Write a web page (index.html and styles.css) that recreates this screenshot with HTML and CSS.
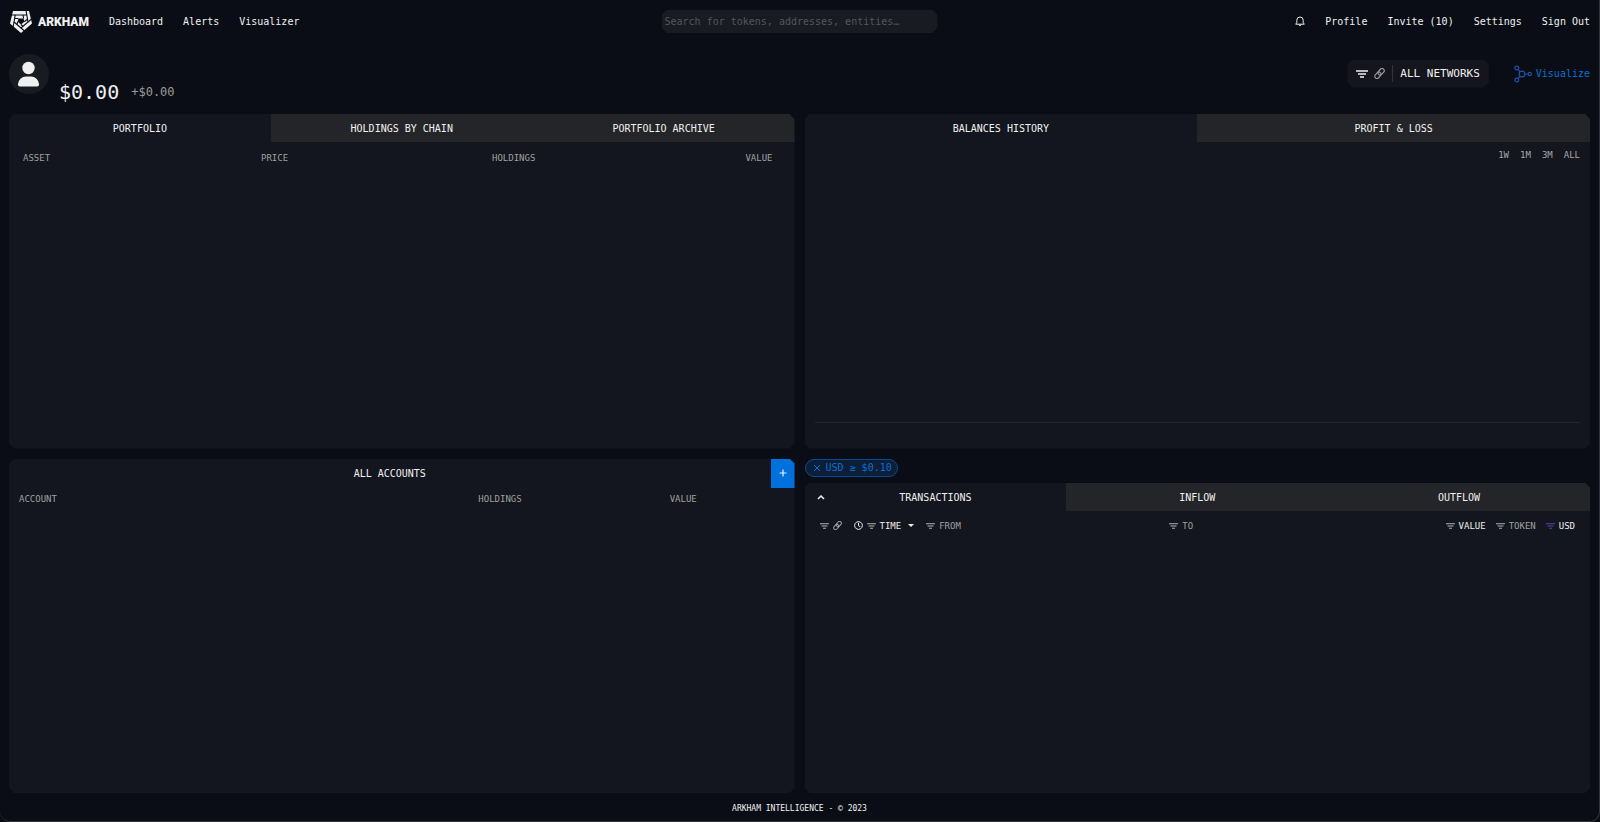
FILE: index.html
```html
<!DOCTYPE html>
<html lang="en">
<head>
    <meta charset="UTF-8">
    <meta name="viewport" content="width=device-width, initial-scale=1.0">
    <title>Arkham</title>
    <link rel="stylesheet" href="styles.css">
</head>
<body>
    <!-- Shared icons -->
    <svg class="sprite" aria-hidden="true">
        <symbol id="filter" viewBox="0 0 12 8">
            <path d="M0 1h12M2 4h8M4 7h4" fill="none" stroke="currentColor" stroke-width="1.6"/>
        </symbol>
        <symbol id="link" viewBox="0 0 12 12">
            <g fill="none" stroke="currentColor" stroke-width="1.3" transform="rotate(-48 6 6)">
                <rect x="-.5" y="3.6" width="7.8" height="4.8" rx="2.4"/>
                <rect x="4.7" y="3.6" width="7.8" height="4.8" rx="2.4"/>
            </g>
        </symbol>
    </svg>

    <header class="topbar">
        <nav class="nav-left">
            <a href="#" class="logo">
                <svg class="logo-mark" viewBox="0 0 24 24" aria-hidden="true">
                    <path d="M4 1H20L23 13.500L12 23L1 13.500Z" fill="#f0f0f0"/>
                    <g fill="none" stroke="#0a0d15" stroke-width="1.1">
                        <path d="M6.200 5H17.800L19 12L12 18L5 12Z"/>
                        <path d="M17.800 5L17.100 1M19 12L22.500 9M12 18L15.500 21M5 12L4 17.500M6.200 5H2.500"/>
                        <path d="M14.600 8.500L14 5M15.300 11.700L18 9.500M12 14.500L14 16.500M8.700 11.700L8 14.500M9.400 8.500H6"/>
                    </g>
                    <path d="M9.400 8.500H14.600L15.300 11.700L12 14.500L8.700 11.700Z" fill="#0a0d15"/>
                </svg>
                <span class="logo-text">ARKHAM</span>
            </a>
            <a href="#">Dashboard</a>
            <a href="#">Alerts</a>
            <a href="#">Visualizer</a>
        </nav>
        <input type="search" class="search cut" aria-label="Search" placeholder="Search for tokens, addresses, entities…">
        <nav class="nav-right">
            <button class="icon-button" aria-label="Notifications">
                <svg class="bell" viewBox="0 0 10 11" aria-hidden="true">
                    <path d="M.7 8.200h8.600L8.200 6.700V4.200a3.200 3.200 0 0 0-6.400 0v2.500ZM3.900 8.500a1.100 1.100 0 0 0 2.200 0" fill="none" stroke="currentColor" stroke-width="1"/>
                </svg>
            </button>
            <a href="#">Profile</a>
            <a href="#">Invite (10)</a>
            <a href="#">Settings</a>
            <a href="#">Sign Out</a>
        </nav>
    </header>

    <section class="summary">
        <div class="avatar">
            <svg viewBox="0 0 22 26" aria-hidden="true">
                <circle cx="10.500" cy="7" r="6.200"/>
                <path d="M0 23a8 8 0 0 1 8-7.500h5a8 8 0 0 1 8 7.500a2 2 0 0 1-2 2.500h-17a2 2 0 0 1-2-2.500Z"/>
            </svg>
        </div>
        <div class="balance">
            <span class="total">$0.00</span>
            <span class="change">+$0.00</span>
        </div>
        <button class="networks cut">
            <svg class="filter-large"><use href="#filter"/></svg>
            <svg class="link-icon"><use href="#link"/></svg>
            <span class="networks-label">ALL NETWORKS</span>
        </button>
        <a href="#" class="visualize">
            <svg viewBox="0 0 18 18" aria-hidden="true">
                <g fill="none" stroke="currentColor" stroke-width="1.2">
                    <circle cx="8" cy="9" r="2.900"/>
                    <circle cx="2.800" cy="3" r="1.900"/>
                    <circle cx="2.800" cy="15" r="1.900"/>
                    <circle cx="15.800" cy="9" r="1.600"/>
                    <path d="M4 4.500l2.200 2.300M4 13.500l2.200-2.300M11 9h3"/>
                </g>
            </svg>
            Visualize
        </a>
    </section>

    <main class="grid">
        <section class="panel cut">
            <div class="tabs">
                <button class="tab active">PORTFOLIO</button>
                <button class="tab">HOLDINGS BY CHAIN</button>
                <button class="tab">PORTFOLIO ARCHIVE</button>
            </div>
            <table class="portfolio-table">
                <thead>
                    <tr>
                        <th>ASSET</th>
                        <th>PRICE</th>
                        <th>HOLDINGS</th>
                        <th>VALUE</th>
                    </tr>
                </thead>
            </table>
        </section>

        <section class="panel cut">
            <div class="tabs">
                <button class="tab active">BALANCES HISTORY</button>
                <button class="tab">PROFIT &amp; LOSS</button>
            </div>
            <div class="ranges">
                <button>1W</button>
                <button>1M</button>
                <button>3M</button>
                <button>ALL</button>
            </div>
            <div class="chart"></div>
        </section>

        <section class="panel cut">
            <div class="panel-header">
                <h2>ALL ACCOUNTS</h2>
                <button class="add" aria-label="Add account">
                    <svg viewBox="0 0 8 8" aria-hidden="true"><path d="M4 .5v7M.5 4h7" stroke="currentColor" stroke-width="1.2"/></svg>
                </button>
            </div>
            <table class="accounts-table">
                <thead>
                    <tr>
                        <th>ACCOUNT</th>
                        <th>HOLDINGS</th>
                        <th>VALUE</th>
                    </tr>
                </thead>
            </table>
        </section>

        <div class="activity">
            <button class="chip">
                <svg viewBox="0 0 8 8" aria-hidden="true"><path d="M1 1l6 6M7 1l-6 6" stroke="currentColor"/></svg>
                USD ≥ $0.10
            </button>
            <section class="panel cut">
                <div class="tabs">
                    <button class="tab active with-arrow">
                        <svg viewBox="0 0 8 5" aria-hidden="true"><path d="M1 4l3-3 3 3" fill="none" stroke="currentColor" stroke-width="1.500"/></svg>
                        <span>TRANSACTIONS</span>
                    </button>
                    <button class="tab">INFLOW</button>
                    <button class="tab">OUTFLOW</button>
                </div>
                <div class="filters">
                    <div class="filter-group">
                        <svg class="filter-icon"><use href="#filter"/></svg>
                        <svg class="link-small"><use href="#link"/></svg>
                    </div>
                    <button class="filter-group bright time">
                        <svg class="clock" viewBox="0 0 10 10" aria-hidden="true"><path d="M5 2v3.300l2 1M5 .7a4.300 4.300 0 1 0 .01 0" fill="none" stroke="currentColor" stroke-width="1.100"/></svg>
                        <svg class="filter-icon"><use href="#filter"/></svg>
                        TIME
                        <svg class="caret" viewBox="0 0 6 3" aria-hidden="true"><path d="M0 0h6L3 3z" fill="currentColor"/></svg>
                    </button>
                    <button class="filter-group from"><svg class="filter-icon"><use href="#filter"/></svg>FROM</button>
                    <button class="filter-group to"><svg class="filter-icon"><use href="#filter"/></svg>TO</button>
                    <button class="filter-group bright"><svg class="filter-icon"><use href="#filter"/></svg>VALUE</button>
                    <button class="filter-group"><svg class="filter-icon"><use href="#filter"/></svg>TOKEN</button>
                    <button class="filter-group bright"><svg class="filter-icon applied"><use href="#filter"/></svg>USD</button>
                </div>
            </section>
        </div>
    </main>

    <footer>ARKHAM INTELLIGENCE - © 2023</footer>
</body>
</html>
```

FILE: styles.css
```css
* {
    box-sizing: border-box;
}

html {
    background-color: #0a0d15;
}

body {
    display: flex;
    flex-direction: column;
    min-height: 100vh;
    margin: 0;
    padding: 0 9px;
    border-right: 1px solid #30333a;
    border-bottom: 1px solid #30333a;
    border-radius: 0 0 10px 10px;
    color: #f0f0f0;
    font-family: "DejaVu Sans Mono", monospace;
    font-size: 10px;
    line-height: 12px;
}

a {
    color: inherit;
    text-decoration: none;
}

button {
    padding: 0;
    border: none;
    background: none;
    color: inherit;
    font: inherit;
    cursor: pointer;
}

svg {
    display: block;
    flex: none;
}

.sprite {
    position: absolute;
    width: 0;
    height: 0;
}

/* chamfered corners */
.cut {
    clip-path: polygon(5px 0, calc(100% - 5px) 0, 100% 5px, 100% calc(100% - 5px), calc(100% - 5px) 100%, 5px 100%, 0 calc(100% - 5px), 0 5px);
}

.topbar {
    display: grid;
    grid-template-columns: 1fr 276px 1fr;
    align-items: center;
    height: 43px;
}

.nav-left,
.nav-right {
    display: flex;
    align-items: center;
    gap: 20px;
}

.nav-right {
    justify-content: flex-end;
}

.logo {
    display: flex;
    align-items: center;
    gap: 5px;
}

.logo-mark {
    width: 24px;
    height: 24px;
}

.logo-text {
    font: 900 12px/16px Roboto, sans-serif;
}

.search {
    width: 100%;
    height: 23px;
    padding: 0 3px;
    border: none;
    background-color: #191b22;
    color: #e0e0e0;
    font: inherit;
}

.search::placeholder {
    color: #55565a;
    opacity: 1;
}

.bell {
    width: 10px;
    height: 11px;
}

.summary {
    display: flex;
    align-items: center;
    height: 71px;
    padding-bottom: 10px;
}

.avatar {
    display: flex;
    align-items: center;
    justify-content: center;
    width: 40px;
    height: 40px;
    border-radius: 50%;
    background-color: #191b22;
}

.avatar svg {
    width: 22px;
    height: 26px;
    fill: #f0f0f0;
}

.balance {
    display: flex;
    align-items: center;
    align-self: flex-end;
    gap: 12px;
    margin-left: 10px;
    margin-right: auto;
}

.total {
    font-size: 20px;
    line-height: 24px;
}

.change {
    font-size: 12px;
    color: #9b9b9b;
}

.networks {
    display: flex;
    align-items: center;
    height: 28px;
    padding: 0 9px;
    background-color: #14151d;
    font-size: 11px;
}

.filter-large {
    width: 12px;
    height: 8px;
    margin-right: 6px;
}

.link-icon {
    width: 11px;
    height: 11px;
    margin-right: 7px;
    color: #9b9b9b;
}

.networks-label {
    padding-left: 7px;
    border-left: 1px solid #33353d;
    line-height: 17px;
}

.visualize {
    display: flex;
    align-items: center;
    gap: 4px;
    margin-left: 25px;
    color: #0a70d0;
}

.visualize svg {
    width: 18px;
    height: 18px;
    color: #2450a4;
}

.grid {
    display: grid;
    flex: 1;
    grid-template-columns: 1fr 1fr;
    grid-template-rows: 1fr 1fr;
    gap: 10px;
}

.panel {
    display: flex;
    flex: 1;
    flex-direction: column;
    background-color: #13161e;
}

.tabs {
    display: grid;
    grid-auto-columns: 1fr;
    grid-auto-flow: column;
    height: 28px;
}

.tab {
    padding-top: 2px;
    background-color: #242529;
}

.tab.active {
    background-color: transparent;
}

.tab.with-arrow {
    display: flex;
    align-items: center;
    padding-right: 20px;
    padding-left: 12px;
}

.with-arrow svg {
    width: 8px;
    height: 5px;
}

.with-arrow span {
    flex: 1;
}

table {
    border-collapse: collapse;
    table-layout: fixed;
    color: #a0a0a0;
    font-size: 9px;
}

th {
    padding: 0;
    font-weight: normal;
    text-align: left;
}

.portfolio-table {
    margin: 10px 22px 0 14px;
}

.portfolio-table th:nth-child(1) {
    width: 238px;
}

.portfolio-table th:nth-child(2) {
    width: 231px;
}

.portfolio-table th:last-child {
    text-align: right;
}

.ranges {
    display: flex;
    justify-content: flex-end;
    gap: 11px;
    padding: 7px 10px 0 0;
    color: #a8a8a8;
    font-size: 9px;
}

.chart {
    flex: 1;
    margin: 0 10px 26px;
    border-bottom: 1px solid #22252e;
}

.panel-header {
    display: flex;
    height: 29px;
}

.panel-header h2 {
    flex: 1;
    margin: 0;
    font-size: 10px;
    font-weight: normal;
    line-height: 29px;
    text-align: center;
}

.add {
    display: flex;
    align-items: center;
    justify-content: center;
    width: 24px;
    background-color: #0070dc;
}

.add svg {
    width: 8px;
    height: 8px;
}

.accounts-table {
    margin: 5px 10px 0;
}

.accounts-table th:nth-child(1) {
    width: 60%;
}

.accounts-table th:nth-child(2) {
    width: 25%;
}

.activity {
    display: flex;
    flex-direction: column;
    gap: 6px;
}

.chip {
    display: flex;
    align-items: center;
    align-self: flex-start;
    gap: 5px;
    height: 18px;
    padding: 0 5px 0 7px;
    border: 1px solid #0a4a8f;
    border-radius: 9px;
    background-color: #0c1e38;
    color: #0a70d0;
}

.chip svg {
    width: 8px;
    height: 8px;
}

.filters {
    display: flex;
    align-items: center;
    gap: 10px;
    padding: 9px 15px 0;
    color: #a0a0a0;
    font-size: 9px;
}

.filter-group {
    display: flex;
    align-items: center;
    gap: 4px;
}

.bright {
    color: #f0f0f0;
}

.time {
    margin: 0 2px;
}

.filter-icon {
    width: 9px;
    height: 6px;
    color: #b0b0b0;
}

.applied {
    color: #5b3fa0;
}

.link-small {
    width: 9px;
    height: 9px;
}

.clock {
    width: 9px;
    height: 9px;
}

.caret {
    width: 6px;
    height: 3px;
    margin-left: 3px;
}

.from {
    flex: 7 1 0;
}

.to {
    flex: 8 1 0;
}

footer {
    padding: 10px 0 6px;
    font-size: 8px;
    text-align: center;
}
```
